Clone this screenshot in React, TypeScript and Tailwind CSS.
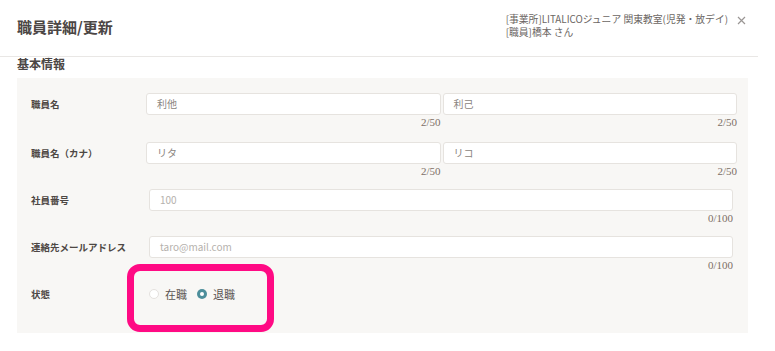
const font = "font-['Noto_Sans_CJK_JP','Noto_Sans',sans-serif]";

type FieldProps = { value?: string; placeholder?: string; count: string };

function Field({ value, placeholder, count }: FieldProps) {
  return (
    <div className="flex-1 flex flex-col">
      <div className="h-[22px] rounded-[3px] border border-[#e6e3df] bg-white pl-[10px] flex items-center text-[10px] leading-none">
        {value ? <span className="text-[#8a8480]">{value}</span> : <span className="text-[#b5b1ad]">{placeholder}</span>}
      </div>
      <div className="text-right text-[11px] leading-[14px] text-[#7d6f66] font-['Liberation_Serif',serif]">{count}</div>
    </div>
  );
}

function Label({ children, width }: { children: React.ReactNode; width: string }) {
  return (
    <div className={`${width} shrink-0 h-[22px] flex items-center text-[9.5px] font-bold text-[#4d4744]`}>
      {children}
    </div>
  );
}

export default function App() {
  return (
    <div className={`relative w-[775px] h-[351px] overflow-hidden bg-white ${font}`}>
      <header className="h-[57px] w-[758px] border-b border-[#e9e7e5] flex items-center justify-between pl-[17px] pr-[12px]">
        <h1 className="text-[15px] font-bold text-[#4b4644] pb-[1px]">職員詳細/更新</h1>
        <div className="flex items-start gap-[9px] mb-[4px]">
          <div className="text-[9.8px] leading-[13px] text-[#6b6663]">
            <p>[事業所]LITALICOジュニア 関東教室(児発・放デイ)</p>
            <p>[職員]橋本 さん</p>
          </div>
          <svg width="9" height="9" viewBox="0 0 9 9" className="mt-[3px]">
            <path d="M1 1L8 8M8 1L1 8" stroke="#9a9694" strokeWidth="1.2" />
          </svg>
        </div>
      </header>

      <h2 className="pl-[17px] text-[12px] leading-[14px] font-bold text-[#4b4644]">基本情報</h2>

      <section className="ml-[17px] mt-[7px] w-[731px] bg-[#f8f7f5] pl-[14px] pt-[15px] pb-[28px]">
        <div className="flex pr-[11px]">
          <Label width="w-[115px]">職員名</Label>
          <div className="flex-1 flex gap-[2px]">
            <Field value="利他" count="2/50" />
            <Field value="利己" count="2/50" />
          </div>
        </div>

        <div className="flex pr-[11px] mt-[13px]">
          <Label width="w-[115px]">職員名（カナ）</Label>
          <div className="flex-1 flex gap-[2px]">
            <Field value="リタ" count="2/50" />
            <Field value="リコ" count="2/50" />
          </div>
        </div>

        <div className="flex pr-[15px] mt-[11px]">
          <Label width="w-[118px]">社員番号</Label>
          <Field placeholder="100" count="0/100" />
        </div>

        <div className="flex pr-[15px] mt-[11px]">
          <Label width="w-[118px]">連絡先メールアドレス</Label>
          <Field placeholder="taro@mail.com" count="0/100" />
        </div>

        <div className="flex mt-[11px]">
          <Label width="w-[118px]">状態</Label>
          <div className="flex items-center h-[22px] text-[11px] text-[#5a5451]">
            <span className="w-[10px] h-[10px] rounded-full border border-[#e4e1de] bg-white" />
            <span className="ml-[6px]">在職</span>
            <span className="ml-[10px] w-[10px] h-[10px] rounded-full bg-[#4d8e9b] flex items-center justify-center">
              <span className="w-[4px] h-[4px] rounded-full bg-white" />
            </span>
            <span className="ml-[6px]">退職</span>
          </div>
        </div>
      </section>

      <div className="absolute left-[127px] top-[264px] w-[147px] h-[68px] rounded-[13px] border-[7px] border-[#ff0a84]" />
    </div>
  );
}
